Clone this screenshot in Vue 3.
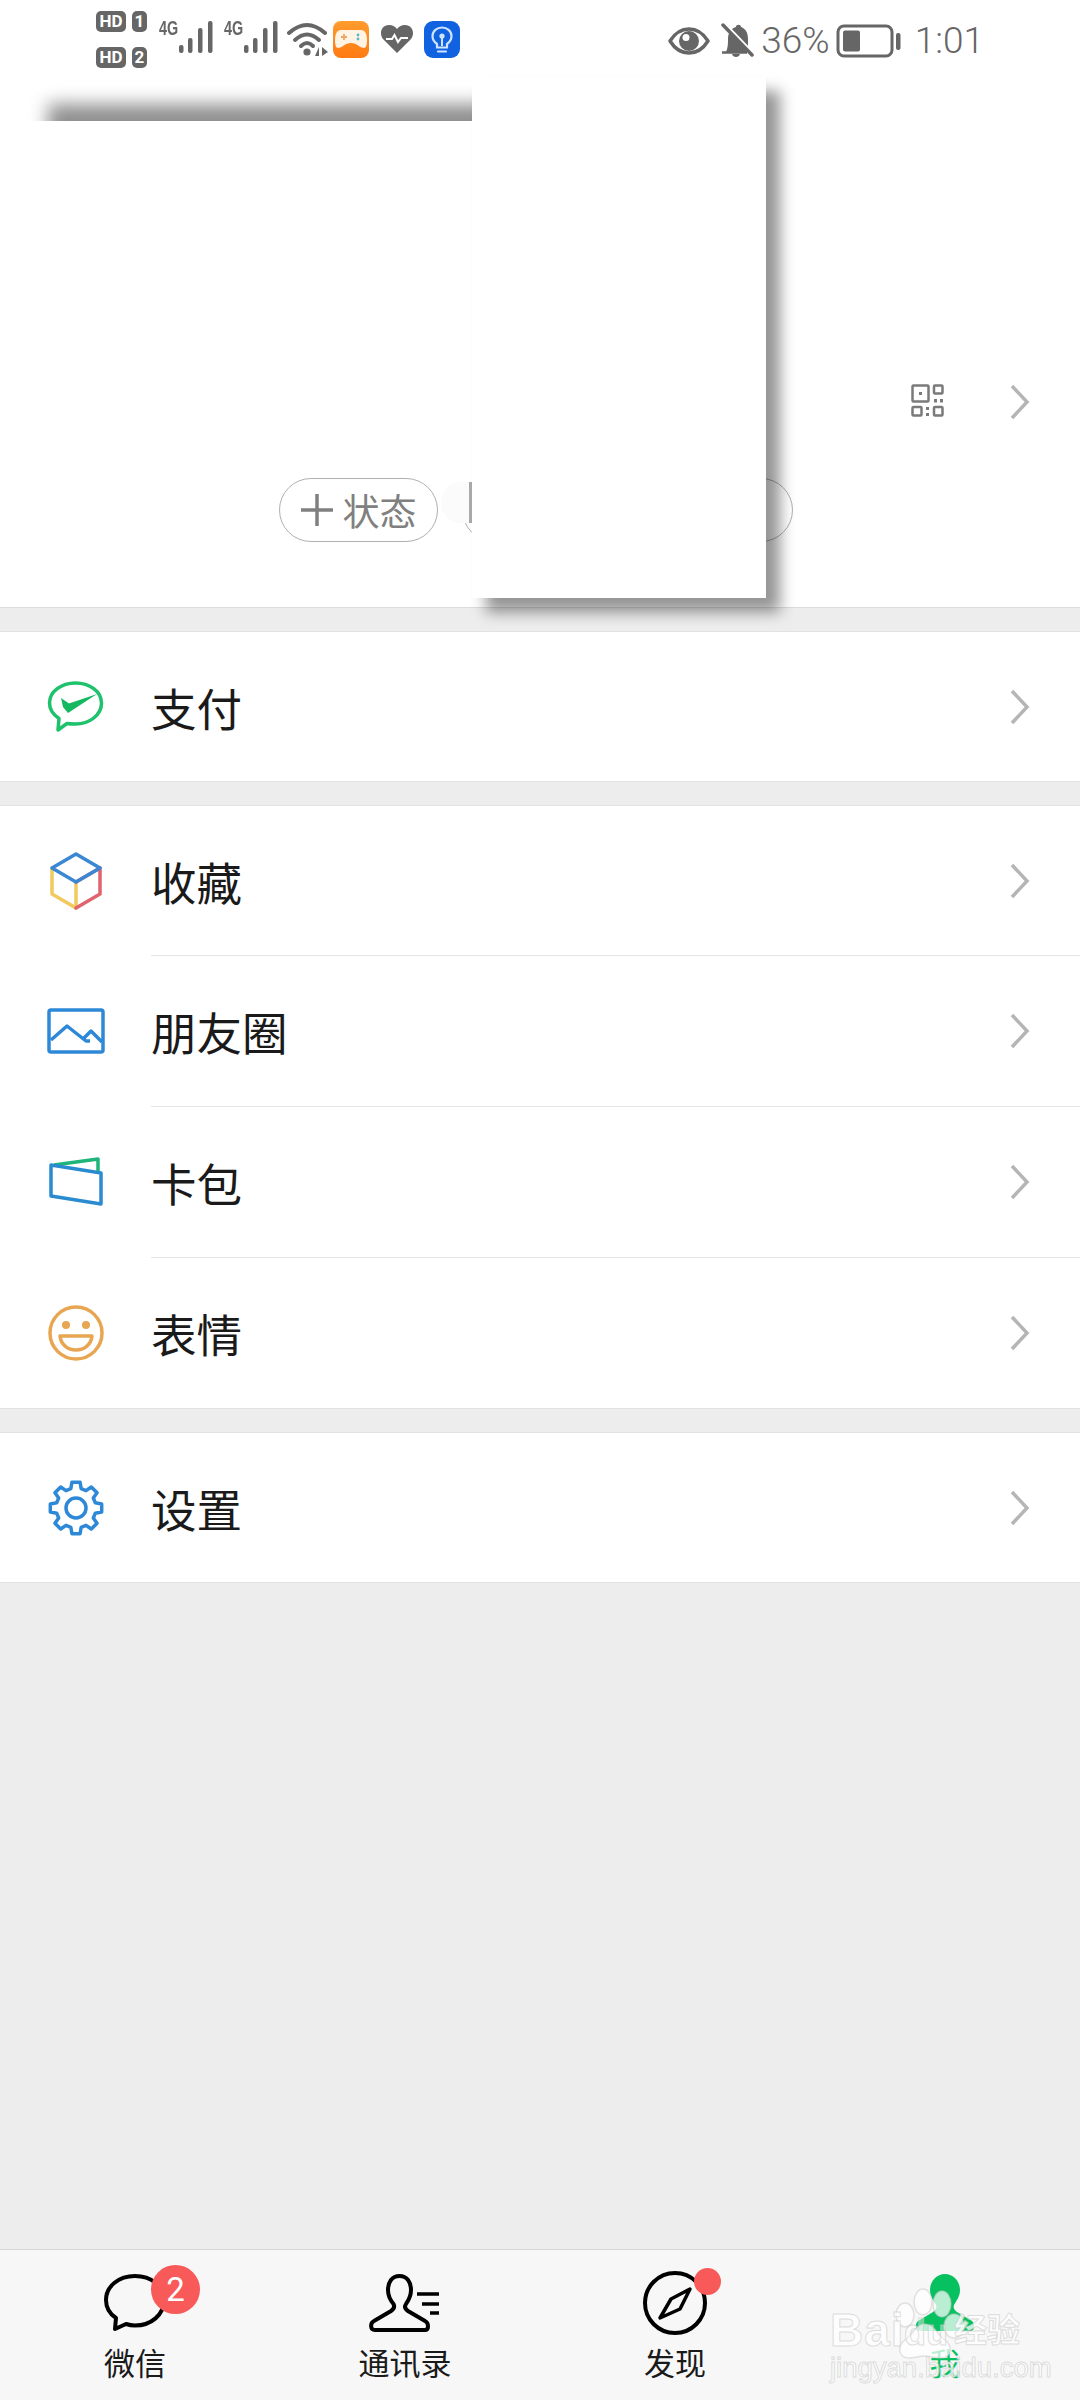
<template>
  <div class="page">
    <header class="profile">
      <div class="status">
        <div class="status-left">
          <div class="sims">
            <div class="sim"><span class="hd">HD</span><span class="num">1</span></div>
            <div class="sim"><span class="hd">HD</span><span class="num">2</span></div>
          </div>
          <div v-for="n in 2" :key="n" class="signal">
            <span class="four-g">4G</span>
            <svg width="36" height="34" viewBox="0 0 36 34">
              <g fill="#666">
                <rect x="1" y="25" width="4.5" height="8" rx="2" />
                <rect x="10" y="18" width="4.5" height="15" rx="2" />
                <rect x="20" y="8" width="4.5" height="25" rx="2" />
                <rect x="30" y="1" width="4.5" height="32" rx="2" />
              </g>
            </svg>
          </div>
          <svg class="wifi" width="44" height="38" viewBox="0 0 44 38">
            <g fill="none" stroke="#666" stroke-width="4" stroke-linecap="round">
              <path d="M3 13Q21 -3 39 13" />
              <path d="M9 20Q21 9 33 20" />
              <path d="M15 26Q21 20 27 26" />
            </g>
            <circle cx="21" cy="32" r="3.6" fill="#666" />
            <path d="M29 36L33 27V36ZM36 27V36L42 32Z" fill="#666" />
          </svg>
          <svg class="game" width="36" height="37" viewBox="0 0 36 37">
            <defs>
              <linearGradient id="gameBg" x1="0" y1="0" x2="0" y2="1">
                <stop offset="0" stop-color="#ff9c2e" />
                <stop offset="1" stop-color="#ff7a12" />
              </linearGradient>
            </defs>
            <rect width="36" height="37" rx="8" fill="url(#gameBg)" />
            <path d="M8 9H28C32 9 34 13 34 19C34 24 33 27 31 27C27 27 24 22 18 22C12 22 9 27 5 27C3 27 2 24 2 19C2 13 4 9 8 9Z" fill="#fff3e4" />
            <path d="M8 16H14M11 13V19" stroke="#f0a468" stroke-width="1.8" />
            <circle cx="25" cy="14" r="1.4" fill="#58b8c8" />
            <circle cx="25" cy="18" r="1.4" fill="#58b8c8" />
          </svg>
          <svg class="heart" width="34" height="30" viewBox="0 0 34 30">
            <path d="M17 29L3 15C-1 10 1 1 9 1C13 1 15.500 3 17 5C18.500 3 21 1 25 1C33 1 35 10 31 15Z" fill="#666" />
            <path d="M6 15H12L14.500 11L18 18L21 14H28" fill="none" stroke="#fff" stroke-width="2" />
          </svg>
          <svg class="bulb" width="36" height="37" viewBox="0 0 36 37">
            <rect width="36" height="37" rx="9" fill="#1162e0" />
            <path d="M13 23C9.500 20.500 8.500 17.500 8.500 15C8.500 10 13 6.500 18 6.500C23 6.500 27.500 10 27.500 15C27.500 17.500 26.500 20.500 23 23V26.500H13Z" fill="none" stroke="#cfe3ff" stroke-width="2.200" />
            <path d="M14 30.500H22" stroke="#cfe3ff" stroke-width="2.200" stroke-linecap="round" />
            <circle cx="18" cy="15" r="2.600" fill="#cfe3ff" />
            <path d="M18 16V25" stroke="#cfe3ff" stroke-width="2" />
          </svg>
        </div>
        <div class="status-right">
          <svg width="42" height="28" viewBox="0 0 42 28">
            <path d="M2 14C7 6 13 2 21 2C29 2 35 6 40 14C35 22 29 26 21 26C13 26 7 22 2 14Z" fill="none" stroke="#666" stroke-width="3.500" stroke-linejoin="round" />
            <circle cx="21" cy="14" r="10" fill="#666" />
            <circle cx="18" cy="10.500" r="3.500" fill="#fff" />
          </svg>
          <svg class="bell" width="33" height="35" viewBox="0 0 33 35">
            <path d="M5 29C7 25 7 20 7 16C7 9 11 5 15 4C15 1 20 1 20 4C25 6 27 10 27 16V29Z" fill="#666" />
            <path d="M1 29.500H26" stroke="#666" stroke-width="2.500" />
            <path d="M11 31C12 35 18 35 19 31Z" fill="#666" />
            <path d="M4 1L32 30" stroke="#fff" stroke-width="3" />
            <path d="M2 2L31 32" stroke="#666" stroke-width="3.500" stroke-linecap="round" />
          </svg>
          <span class="status-text">36%</span>
          <svg class="battery" width="65" height="34" viewBox="0 0 65 34">
            <rect x="2" y="2" width="54" height="30" rx="6" fill="none" stroke="#666" stroke-width="3" />
            <rect x="7" y="6.500" width="17" height="21" rx="2" fill="#666" />
            <rect x="60" y="9" width="4.500" height="17" rx="2" fill="#666" />
          </svg>
          <span class="status-text time">1:01</span>
        </div>
      </div>

      <div class="qr-row">
        <svg class="qr" width="33" height="33" viewBox="0 0 33 33">
          <g fill="none" stroke="#7a7a7a" stroke-width="2.500">
            <rect x="1.500" y="1.500" width="16" height="16" rx="1" />
            <rect x="23" y="1.500" width="8.500" height="8" rx="1" />
            <rect x="1.500" y="23" width="9" height="8.500" rx="1" />
            <rect x="23" y="23" width="8.500" height="8.500" rx="1" />
          </g>
          <g fill="#7a7a7a">
            <rect x="8" y="8" width="3" height="3" />
            <rect x="23" y="15" width="3" height="3.500" />
            <rect x="29" y="15" width="3" height="3.500" />
            <rect x="15" y="23" width="3" height="3" />
            <rect x="15" y="29" width="3" height="3" />
          </g>
        </svg>
        <svg class="chevron" width="20" height="36" viewBox="0 0 20 36">
          <path d="M2 2L17 18L2 34" />
        </svg>
      </div>

      <div class="pills">
        <div class="pill">
          <svg class="plus" width="32" height="32" viewBox="0 0 32 32">
            <path d="M0 16H32M16 0V32" stroke="#808080" stroke-width="3.500" />
          </svg>
          状态
        </div>
        <div class="pill pill-wide"></div>
      </div>

      <div class="mask-top"><div class="mask-top-shadow"></div></div>
      <div class="mask-dab"></div>
      <div class="mask-main"></div>
    </header>

    <section v-for="(group, g) in groups" :key="g" class="group">
      <div v-for="item in group" :key="item.label" class="row">
        <div class="row-icon">
          <svg v-if="item.icon === 'pay'" width="60" height="54" viewBox="0 0 60 54">
            <path d="M29.500 3C15.500 3 3.500 11.500 3.500 23C3.500 29.500 7 34.500 13 38.500L12 50L21 43.500C24 44 26.500 44 29.500 44C43.500 44 55.500 35 55.500 23C55.500 11.500 43.500 3 29.500 3Z" fill="none" stroke="#1ec16c" stroke-width="3.500" stroke-linejoin="round" />
            <path d="M15 18L23 23.500L51 14L22 33L17 27Z" fill="#14b85f" />
          </svg>
          <svg v-else-if="item.icon === 'box'" width="56" height="62" viewBox="0 0 56 62">
            <g fill="none" stroke-width="3.500" stroke-linejoin="round" stroke-linecap="round">
              <path d="M4 44V18M4 44L28 58M28 32V58" stroke="#f2c95c" />
              <path d="M28 32L52 18V44L28 58" stroke="#e0636e" />
              <path d="M28 4L4 18L28 32L52 18Z" stroke="#3a87d3" />
            </g>
          </svg>
          <svg v-else-if="item.icon === 'photo'" width="60" height="48" viewBox="0 0 60 48">
            <g fill="none" stroke="#2e88d8" stroke-width="3.500" stroke-linejoin="round">
              <rect x="3" y="3" width="54" height="42" rx="2" />
              <path d="M5 33L21 19L40 34H44M37 32L45 24L56 35" />
            </g>
          </svg>
          <svg v-else-if="item.icon === 'card'" width="58" height="52" viewBox="0 0 58 52">
            <g fill="none" stroke-width="3.500" stroke-linejoin="round">
              <path d="M7 9L51 3V15" stroke="#1fb57a" />
              <path d="M4 9L54 17V48L4 40Z" stroke="#2a8bd0" />
            </g>
          </svg>
          <svg v-else-if="item.icon === 'face'" width="60" height="60" viewBox="0 0 60 60">
            <g fill="none" stroke="#e8a552" stroke-width="3.500" stroke-linejoin="round">
              <circle cx="30" cy="30" r="26" />
              <path d="M14 33H46C45 42 38 47 30 47C22 47 15 42 14 33Z" />
            </g>
            <circle cx="20" cy="22" r="4" fill="#e8a552" />
            <circle cx="40" cy="22" r="4" fill="#e8a552" />
          </svg>
          <svg v-else width="60" height="60" viewBox="-30 -30 60 60">
            <g fill="none" stroke="#2e88d8" stroke-width="3.500" stroke-linejoin="round">
              <path :d="gearPath" />
              <circle r="10" />
            </g>
          </svg>
        </div>
        <div class="row-body">
          <span class="row-label">{{ item.label }}</span>
          <svg class="chevron" width="20" height="36" viewBox="0 0 20 36">
            <path d="M2 2L17 18L2 34" />
          </svg>
        </div>
      </div>
    </section>

    <nav class="tabbar">
      <div class="tab">
        <div class="tab-icon">
          <svg width="64" height="60" viewBox="0 0 64 60">
            <path d="M32 3C16 3 3 13 3 27C3 35 7 41 13 45L12 56L23 51C26 52 29 52.500 32 52.500C48 52.500 61 42 61 27C61 13 48 3 32 3Z" fill="none" stroke="#000" stroke-width="4" stroke-linejoin="round" />
          </svg>
          <span class="badge">2</span>
        </div>
        <span class="tab-label">微信</span>
      </div>
      <div class="tab">
        <div class="tab-icon">
          <svg width="76" height="60" viewBox="0 0 76 60">
            <path d="M32.500 3C25 3 21 9 21 17C21 24 24 28 26.500 31C28 34 27 36 24 38L7 48C3 50 3 57 8 57H58C62 57 62 50 58 48L41 38C38 36 37 34 39 31C41 28 44 24 44 17C44 9 40 3 32.500 3Z" fill="none" stroke="#000" stroke-width="4" />
            <path d="M50 21H72M55 31H72M63 40H72" stroke="#000" stroke-width="3.500" />
          </svg>
        </div>
        <span class="tab-label">通讯录</span>
      </div>
      <div class="tab">
        <div class="tab-icon">
          <svg width="68" height="66" viewBox="0 0 68 66">
            <circle cx="34" cy="33" r="30" fill="none" stroke="#000" stroke-width="4" />
            <path d="M49 19L30 29L19 48L39 39Z" fill="none" stroke="#000" stroke-width="3.500" stroke-linejoin="round" />
          </svg>
          <span class="dot"></span>
        </div>
        <span class="tab-label">发现</span>
      </div>
      <div class="tab tab-active">
        <div class="tab-icon">
          <svg width="60" height="58" viewBox="0 0 60 58">
            <path d="M30 0C21 0 15 8 15 16C15 23 19 27 21 31C22 34 21 36 18 38L3 47C0 49 0 57 4 57H56C60 57 60 49 57 47L42 38C39 36 38 34 39 31C41 27 45 23 45 16C45 8 39 0 30 0Z" fill="#07c160" />
          </svg>
        </div>
        <span class="tab-label">我</span>
      </div>

      <div class="watermark">
        <svg class="paw" width="90" height="90" viewBox="0 0 90 90">
          <g fill="rgba(255,255,255,0.72)" stroke="rgba(200,200,200,0.5)" stroke-width="1.500">
            <ellipse cx="10" cy="27" rx="9" ry="12" />
            <ellipse cx="28" cy="14" rx="9" ry="13" />
            <ellipse cx="47" cy="16" rx="9" ry="13" />
            <ellipse cx="59" cy="38" rx="10" ry="12" />
            <path d="M30 36C39 36 42 46 50 52C58 58 57 70 46 70C38 70 35 68 30 68C24 68 20 70 14 70C3 70 2 58 10 52C18 46 21 36 30 36Z" />
          </g>
        </svg>
        <span class="wm-big wm-bai">Bai</span>
        <span class="wm-big wm-du">du</span>
        <span class="wm-big wm-cn">经验</span>
        <span class="wm-url">jingyan.baidu.com</span>
      </div>
    </nav>
  </div>
</template>

<script setup>
const groups = [
  [{ icon: 'pay', label: '支付' }],
  [
    { icon: 'box', label: '收藏' },
    { icon: 'photo', label: '朋友圈' },
    { icon: 'card', label: '卡包' },
    { icon: 'face', label: '表情' }
  ],
  [{ icon: 'gear', label: '设置' }]
]

// eight teeth, first one pointing up
function buildGear() {
  const pts = []
  for (let i = 0; i < 8; i++) {
    const a = i * 45 - 90
    for (const [r, d] of [[20, -15], [26, -9], [26, 9], [20, 15]]) {
      const rad = ((a + d) * Math.PI) / 180
      pts.push(`${(r * Math.cos(rad)).toFixed(2)} ${(r * Math.sin(rad)).toFixed(2)}`)
    }
  }
  return `M${pts.join('L')}Z`
}

const gearPath = buildGear()
</script>

<style scoped>
.page {
  display: flex;
  flex-direction: column;
  height: 2400px;
  background: #ededed;
  overflow: hidden;
  font-family: "Noto Sans CJK SC", "Noto Sans", sans-serif;
}
.profile {
  position: relative;
  height: 607px;
  background: #fff;
  border-bottom: 1px solid #dcdcdc;
  margin-bottom: 23px;
  flex-shrink: 0;
}
.status {
  display: flex;
  justify-content: space-between;
  align-items: center;
  height: 78px;
  padding: 0 96px 0 96px;
}
.status-left,
.status-right {
  display: flex;
  align-items: center;
}
.status-right {
  margin-top: 3px;
}
.sims {
  display: flex;
  flex-direction: column;
  gap: 15px;
  margin-right: 14px;
}
.sim {
  display: flex;
  gap: 6px;
}
.hd,
.num {
  display: flex;
  align-items: center;
  justify-content: center;
  height: 21px;
  background: #666;
  color: #fff;
  font: 700 17px/21px Roboto, sans-serif;
  border-radius: 5px;
}
.hd {
  width: 30px;
}
.num {
  width: 15px;
}
.signal {
  display: flex;
  align-items: flex-end;
  width: 53px;
  margin: -4px 12px 0 0;
  position: relative;
  height: 34px;
}
.signal svg {
  margin-left: auto;
}
.four-g {
  position: absolute;
  left: -2px;
  top: -2px;
  color: #666;
  font: 700 20px/20px "Liberation Sans", sans-serif;
  transform: scaleX(0.72);
  transform-origin: left center;
}
.wifi {
  margin-left: -5px;
  margin-right: 3px;
}
.heart {
  margin: 0 10px 0 11px;
}
.status-right .bell {
  margin: 0 7px 0 11px;
}
.status-text {
  color: #666;
  font: 300 37px/40px Roboto, sans-serif;
}
.battery {
  margin: 0 14px 0 6px;
}
.qr-row {
  display: flex;
  justify-content: flex-end;
  align-items: center;
  gap: 66px;
  height: 36px;
  margin-top: 306px;
  padding-right: 50px;
}
.qr {
  margin-top: -4px;
}
.chevron path {
  fill: none;
  stroke: #b5b5b5;
  stroke-width: 3.5px;
}
.pills {
  display: flex;
  gap: 24px;
  margin-top: 58px;
  padding-left: 279px;
}
.pill {
  display: flex;
  align-items: center;
  justify-content: center;
  box-sizing: border-box;
  width: 159px;
  height: 64px;
  border: 1px solid #b0b0b0;
  border-radius: 32px;
  color: #808080;
  font-size: 37px;
}
.pill-wide {
  width: 331px;
}
.plus {
  margin-right: 10px;
}
/* the white patches painted over the personal details */
.mask-top {
  position: absolute;
  left: 24px;
  top: 70px;
  width: 448px;
  height: 51px;
  overflow: hidden;
}
.mask-top-shadow {
  position: absolute;
  left: 24px;
  top: 34px;
  width: 500px;
  height: 60px;
  background: #8f8f8f;
  filter: blur(9px);
}
.mask-dab {
  position: absolute;
  left: 441px;
  top: 482px;
  box-sizing: border-box;
  width: 31px;
  height: 41px;
  background: #fbfbfb;
  border-right: 3px solid #aaa;
  border-radius: 20px 0 0 20px;
}
.mask-main {
  position: absolute;
  left: 472px;
  top: 77px;
  width: 294px;
  height: 521px;
  background: #fff;
  box-shadow: 14px 14px 14px rgba(0, 0, 0, 0.42);
  z-index: 2;
}
.group {
  background: #fff;
  border-top: 1px solid #e2e2e2;
  border-bottom: 1px solid #e2e2e2;
  margin-bottom: 23px;
  flex-shrink: 0;
}
.row {
  display: flex;
  height: 149px;
}
.row-icon {
  display: flex;
  align-items: center;
  justify-content: center;
  width: 151px;
  flex-shrink: 0;
}
.row-body {
  display: flex;
  flex: 1;
  align-items: center;
  justify-content: space-between;
  padding-right: 50px;
}
.row + .row {
  height: 151px;
}
.row + .row .row-body {
  border-top: 1px solid #e5e5e5;
}
.row-label {
  color: #1a1a1a;
  font-size: 45.5px;
  line-height: 60px;
}
.tabbar {
  position: relative;
  display: flex;
  margin-top: auto;
  height: 150px;
  background: #f7f7f7;
  border-top: 1px solid #d6d6d6;
  z-index: 3;
}
.tab {
  flex: 1;
  display: flex;
  flex-direction: column;
  align-items: center;
  padding-top: 20px;
}
.tab-icon {
  position: relative;
  display: flex;
  align-items: center;
  justify-content: center;
  height: 66px;
}
.tab-label {
  margin-top: 9px;
  color: #1a1a1a;
  font-size: 31px;
  line-height: 34px;
}
.tab-active .tab-label {
  color: #07c160;
}
.badge {
  position: absolute;
  left: 48px;
  top: -5px;
  width: 49px;
  height: 49px;
  border-radius: 50%;
  background: #f85959;
  color: #fff;
  text-align: center;
  font: 400 33px/49px Roboto, sans-serif;
}
.dot {
  position: absolute;
  left: 53px;
  top: -2px;
  width: 27px;
  height: 27px;
  border-radius: 50%;
  background: #f85959;
}
.watermark {
  position: absolute;
  left: 830px;
  top: 0;
  width: 200px;
  height: 150px;
  pointer-events: none;
}
.paw {
  position: absolute;
  left: 65px;
  top: 38px;
}
.wm-big {
  position: absolute;
  top: 50px;
  color: rgba(255, 255, 255, 0.8);
  -webkit-text-stroke: 1px rgba(200, 200, 200, 0.6);
  font: 700 46px/60px "Liberation Sans", sans-serif;
}
.wm-bai {
  left: 0;
  letter-spacing: 1px;
}
.wm-du {
  left: 74px;
  font-size: 36px;
  top: 53px;
  color: rgba(255, 255, 255, 0.4);
}
.wm-cn {
  left: 124px;
  top: 48px;
  font: 700 33px/60px "Noto Sans CJK SC", sans-serif;
}
.wm-url {
  position: absolute;
  left: 0;
  top: 102px;
  color: rgba(255, 255, 255, 0.75);
  -webkit-text-stroke: 1px rgba(200, 200, 200, 0.6);
  font: 400 27.5px/32px "Liberation Sans", sans-serif;
  white-space: nowrap;
}
</style>
